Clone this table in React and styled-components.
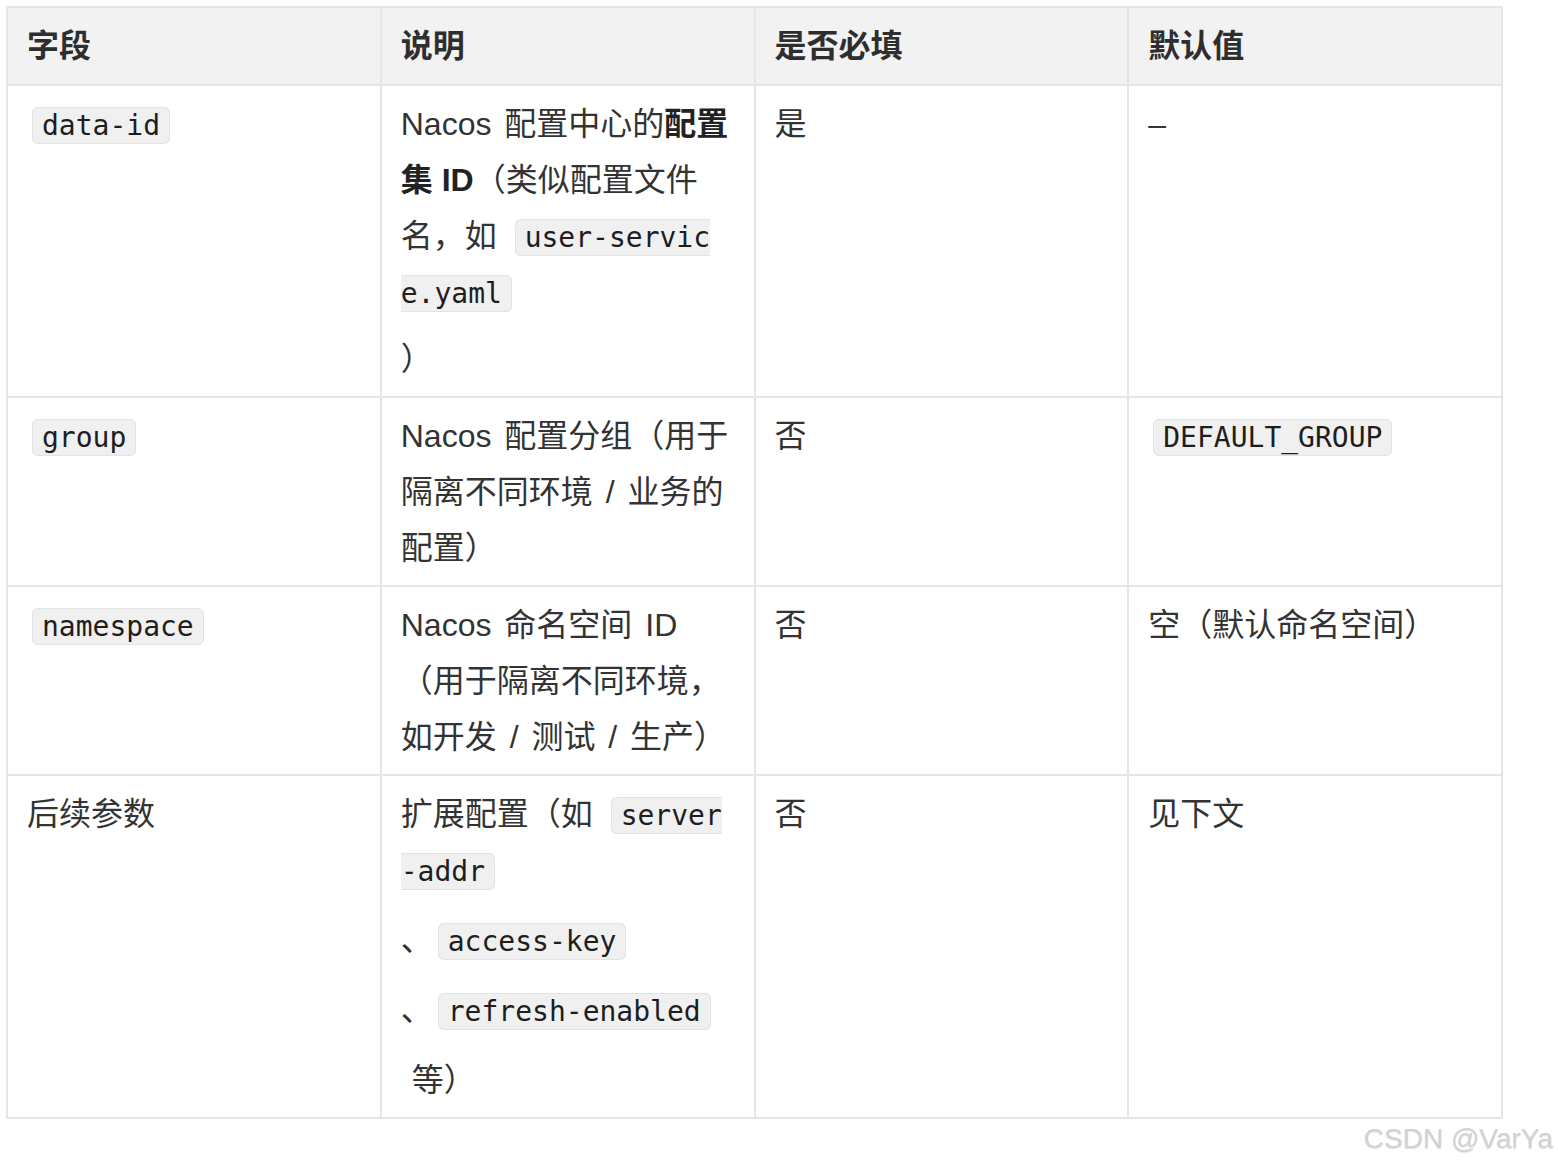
import React from "react";
import styled, { createGlobalStyle, css } from "styled-components";

const GlobalStyle = createGlobalStyle`
  html, body {
    margin: 0;
    padding: 0;
    background: #ffffff;
  }
  body {
    font-family: "Liberation Sans", "Noto Sans CJK SC", sans-serif;
    color: #333333;
  }
`;

const Page = styled.div`
  position: relative;
  width: 1558px;
  height: 1166px;
  padding: 6px 0 0 6px;
  box-sizing: border-box;
  overflow: hidden;
`;

const Table = styled.table`
  width: 1497px;
  table-layout: fixed;
  border-collapse: collapse;
  font-size: 32px;
  word-spacing: 4px;
`;

const Th = styled.th`
  background: #f2f2f2;
  border: 2px solid #e6e6e6;
  padding: 10px 19px 10px;
  text-align: left;
  font-weight: 700;
  color: #2e2e2e;
  line-height: 56px;
`;

const Td = styled.td`
  border: 2px solid #e6e6e6;
  padding: 10px 19px 9px;
  vertical-align: top;
  color: #333333;
`;

const Line = styled.div`
  height: 56px;
  line-height: 56px;
  white-space: nowrap;
  margin-top: ${(p) => p.$gap || 0}px;
  padding-left: ${(p) => p.$indent || 0}px;
`;

const Strong = styled.strong`
  font-weight: 700;
  color: #222222;
  word-spacing: 0;
`;

const Code = styled.code`
  font-family: "DejaVu Sans Mono", "Liberation Mono", monospace;
  font-size: 28px;
  line-height: 32px;
  word-spacing: 0;
  color: #1e1e1e;
  background: #f0f0f0;
  border: 1px solid #e3e3e3;
  border-radius: 6px;
  padding: 1px 9px;
  margin: 0 5px;
  ${(p) =>
    p.$cut === "right" &&
    css`
      border-right: none;
      border-top-right-radius: 0;
      border-bottom-right-radius: 0;
      padding-right: 0;
      margin-right: 0;
    `}
  ${(p) =>
    p.$cut === "left" &&
    css`
      border-left: none;
      border-top-left-radius: 0;
      border-bottom-left-radius: 0;
      padding-left: 0;
      margin-left: 0;
    `}
`;

const Watermark = styled.div`
  position: absolute;
  right: 5px;
  bottom: 11px;
  font-family: "Liberation Sans", Arial, sans-serif;
  font-size: 28px;
  color: #d2d2d2;
  text-shadow: 0 1px 1px rgba(0, 0, 0, 0.12);
`;

export default function App() {
  return (
    <Page>
      <GlobalStyle />
      <Table>
        <thead>
          <tr>
            <Th>字段</Th>
            <Th>说明</Th>
            <Th>是否必填</Th>
            <Th>默认值</Th>
          </tr>
        </thead>
        <tbody>
          <tr>
            <Td>
              <Line>
                <Code>data-id</Code>
              </Line>
            </Td>
            <Td>
              <Line>
                Nacos 配置中心的<Strong>配置</Strong>
              </Line>
              <Line>
                <Strong>集 ID</Strong>（类似配置文件
              </Line>
              <Line>
                名，如 <Code $cut="right">user-servic</Code>
              </Line>
              <Line>
                <Code $cut="left">e.yaml</Code>
              </Line>
              <Line $gap={11}>）</Line>
            </Td>
            <Td>
              <Line>是</Line>
            </Td>
            <Td>
              <Line>–</Line>
            </Td>
          </tr>
          <tr>
            <Td>
              <Line>
                <Code>group</Code>
              </Line>
            </Td>
            <Td>
              <Line>Nacos 配置分组（用于</Line>
              <Line>隔离不同环境 / 业务的</Line>
              <Line>配置）</Line>
            </Td>
            <Td>
              <Line>否</Line>
            </Td>
            <Td>
              <Line>
                <Code>DEFAULT_GROUP</Code>
              </Line>
            </Td>
          </tr>
          <tr>
            <Td>
              <Line>
                <Code>namespace</Code>
              </Line>
            </Td>
            <Td>
              <Line>Nacos 命名空间 ID</Line>
              <Line>（用于隔离不同环境，</Line>
              <Line>如开发 / 测试 / 生产）</Line>
            </Td>
            <Td>
              <Line>否</Line>
            </Td>
            <Td>
              <Line>空（默认命名空间）</Line>
            </Td>
          </tr>
          <tr>
            <Td>
              <Line>后续参数</Line>
            </Td>
            <Td>
              <Line>
                扩展配置（如 <Code $cut="right">server</Code>
              </Line>
              <Line>
                <Code $cut="left">-addr</Code>
              </Line>
              <Line $gap={14}>
                、<Code>access-key</Code>
              </Line>
              <Line $gap={14}>
                、<Code>refresh-enabled</Code>
              </Line>
              <Line $gap={14} $indent={11}>
                等）
              </Line>
            </Td>
            <Td>
              <Line>否</Line>
            </Td>
            <Td>
              <Line>见下文</Line>
            </Td>
          </tr>
        </tbody>
      </Table>
      <Watermark>CSDN @VarYa</Watermark>
    </Page>
  );
}
